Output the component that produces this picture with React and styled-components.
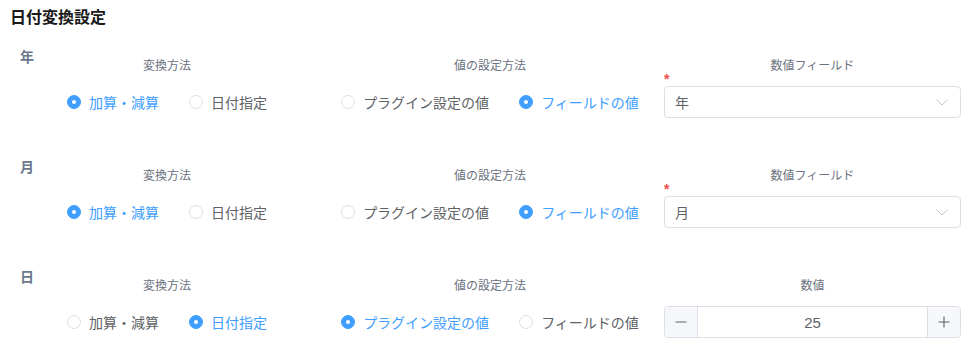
import React from "react";
import styled, { createGlobalStyle } from "styled-components";

const Global = createGlobalStyle`
  html, body { margin: 0; padding: 0; background: #fff; }
  body {
    font-family: "Noto Sans CJK JP", "Noto Sans", "Liberation Sans", sans-serif;
    -webkit-font-smoothing: antialiased;
  }
`;

const Page = styled.div`
  padding: 5px 10px 0 10px;
  width: 976px;
  box-sizing: border-box;
`;

const Title = styled.h2`
  margin: 0;
  font-size: 16px;
  line-height: 22px;
  font-weight: 700;
  color: #1a1a1a;
`;

const Sections = styled.div`
  display: flex;
  flex-direction: column;
  padding-top: 20px;
`;

const Section = styled.div`
  display: flex;
  align-items: flex-start;
  height: 110px;
  padding-left: 10px;
`;

const SectionLabel = styled.div`
  width: 37px;
  font-size: 14px;
  line-height: 18px;
  font-weight: 700;
  color: #6b778c;
`;

const Column = styled.div`
  display: flex;
  flex-direction: column;
  align-items: center;
  width: ${(p) => p.$width}px;
  margin-left: ${(p) => p.$offset || 0}px;
  padding-top: 10px;
  flex: none;
`;

const ColumnLabel = styled.div`
  font-size: 12px;
  line-height: 16px;
  color: #6b7280;
  margin-bottom: 13px;
`;

const ControlRow = styled.div`
  position: relative;
  display: flex;
  align-items: center;
  height: 32px;
  width: ${(p) => (p.$full ? "100%" : "auto")};
`;

const RadioItem = styled.label`
  display: inline-flex;
  align-items: center;
  cursor: pointer;
  margin-right: 30px;
  &:last-child { margin-right: 0; }
`;

const RadioDot = styled.span`
  box-sizing: border-box;
  width: 14px;
  height: 14px;
  border-radius: 50%;
  border: 1px solid ${(p) => (p.$checked ? "#409eff" : "#dcdfe6")};
  background: ${(p) => (p.$checked ? "#409eff" : "#fff")};
  position: relative;
  flex: none;
  &::after {
    content: "";
    display: ${(p) => (p.$checked ? "block" : "none")};
    position: absolute;
    width: 4px;
    height: 4px;
    border-radius: 50%;
    background: #fff;
    left: 50%;
    top: 50%;
    transform: translate(-50%, -50%);
  }
`;

const RadioText = styled.span`
  margin-left: 8px;
  font-size: 14px;
  line-height: 18px;
  color: ${(p) => (p.$checked ? "#409eff" : "#606266")};
  white-space: nowrap;
`;

const Required = styled.span`
  position: absolute;
  left: 0;
  top: -14px;
  color: #f04b4b;
  font-size: 14px;
  font-weight: 700;
  line-height: 14px;
  font-family: "Liberation Sans", sans-serif;
`;

const SelectBox = styled.div`
  box-sizing: border-box;
  width: 100%;
  height: 32px;
  border: 1px solid #dcdfe6;
  border-radius: 4px;
  display: flex;
  align-items: center;
  justify-content: space-between;
  padding: 0 12px 0 10px;
  font-size: 14px;
  color: #606266;
`;

const NumberBox = styled.div`
  box-sizing: border-box;
  width: 100%;
  height: 32px;
  border: 1px solid #dcdfe6;
  border-radius: 4px;
  display: flex;
  align-items: stretch;
  overflow: hidden;
`;

const StepButton = styled.div`
  width: 32px;
  flex: none;
  background: #f5f7fa;
  display: flex;
  align-items: center;
  justify-content: center;
  ${(p) => (p.$side === "left" ? "border-right: 1px solid #dcdfe6;" : "border-left: 1px solid #dcdfe6;")}
`;

const NumberValue = styled.div`
  flex: 1;
  display: flex;
  align-items: center;
  justify-content: center;
  font-size: 15px;
  color: #606266;
  font-family: "Liberation Sans", "Noto Sans", sans-serif;
`;

const Chevron = () => (
  <svg width="12" height="7" viewBox="0 0 12 7" fill="none">
    <polyline points="0.5,0.5 6,6 11.5,0.5" stroke="#c0c4cc" strokeWidth="1" />
  </svg>
);

const Minus = () => (
  <svg width="12" height="12" viewBox="0 0 12 12">
    <line x1="0.5" y1="6" x2="11.5" y2="6" stroke="#606266" strokeWidth="1.1" />
  </svg>
);

const Plus = () => (
  <svg width="12" height="12" viewBox="0 0 12 12">
    <line x1="0.5" y1="6" x2="11.5" y2="6" stroke="#606266" strokeWidth="1.1" />
    <line x1="6" y1="0.5" x2="6" y2="11.5" stroke="#606266" strokeWidth="1.1" />
  </svg>
);

const Radio = ({ checked, children }) => (
  <RadioItem>
    <RadioDot $checked={checked} />
    <RadioText $checked={checked}>{children}</RadioText>
  </RadioItem>
);

const sections = [
  { label: "年", method: 0, source: 1, field: "年" },
  { label: "月", method: 0, source: 1, field: "月" },
  { label: "日", method: 1, source: 0, value: 25 },
];

export default function App() {
  return (
    <>
      <Global />
      <Page>
        <Title>日付変換設定</Title>
        <Sections>
          {sections.map((s) => (
            <Section key={s.label}>
              <SectionLabel>{s.label}</SectionLabel>
              <Column $width={220}>
                <ColumnLabel>変換方法</ColumnLabel>
                <ControlRow>
                  <Radio checked={s.method === 0}>加算・減算</Radio>
                  <Radio checked={s.method === 1}>日付指定</Radio>
                </ControlRow>
              </Column>
              <Column $width={320} $offset={53}>
                <ColumnLabel>値の設定方法</ColumnLabel>
                <ControlRow>
                  <Radio checked={s.source === 0}>プラグイン設定の値</Radio>
                  <Radio checked={s.source === 1}>フィールドの値</Radio>
                </ControlRow>
              </Column>
              <Column $width={297} $offset={14}>
                {s.source === 1 ? (
                  <>
                    <ColumnLabel>数値フィールド</ColumnLabel>
                    <ControlRow $full>
                      <Required>*</Required>
                      <SelectBox>
                        <span>{s.field}</span>
                        <Chevron />
                      </SelectBox>
                    </ControlRow>
                  </>
                ) : (
                  <>
                    <ColumnLabel>数値</ColumnLabel>
                    <ControlRow $full>
                      <NumberBox>
                        <StepButton $side="left"><Minus /></StepButton>
                        <NumberValue>{s.value}</NumberValue>
                        <StepButton $side="right"><Plus /></StepButton>
                      </NumberBox>
                    </ControlRow>
                  </>
                )}
              </Column>
            </Section>
          ))}
        </Sections>
      </Page>
    </>
  );
}
